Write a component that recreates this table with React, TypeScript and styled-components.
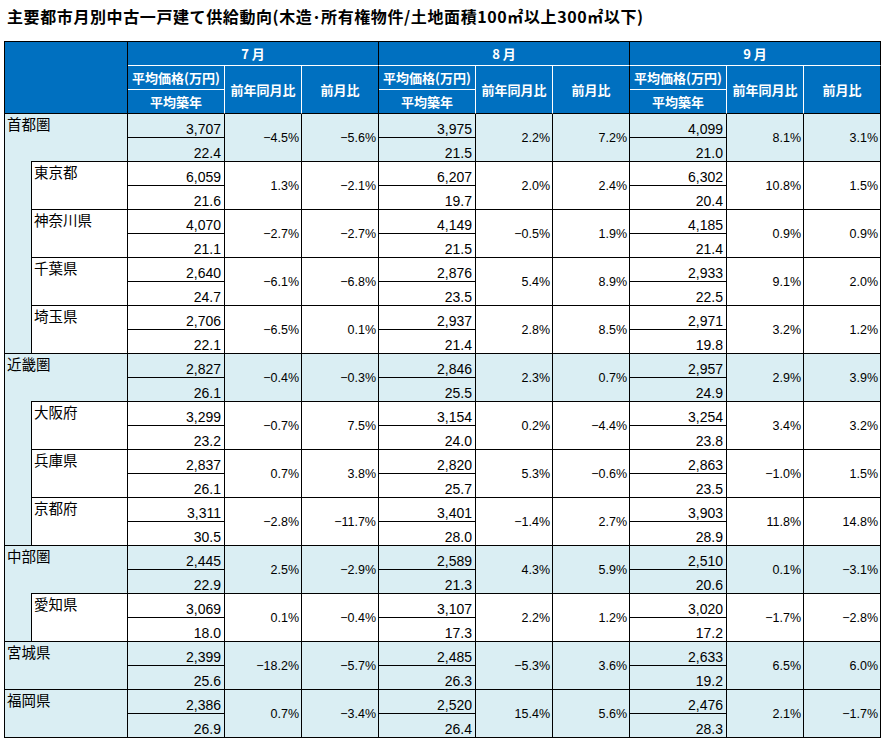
import React from "react";
import styled, { createGlobalStyle } from "styled-components";

const GlobalStyle = createGlobalStyle`
  html, body { margin: 0; padding: 0; background: #ffffff; }
  body { font-family: "Noto Sans CJK JP", "Noto Sans", sans-serif; }
`;

const BLUE = "#0070C0";
const LIGHT = "#DAEEF3";
const JP = `"Noto Sans CJK JP", "Noto Sans", sans-serif`;
const NUM = `"Liberation Sans", Arial, sans-serif`;

type Month = [string, string, string, string];
type Region = { name: string; data: [Month, Month, Month]; children?: Region[] };

const regions: Region[] = [
  {
    name: "首都圏",
    data: [
      ["3,707", "22.4", "−4.5%", "−5.6%"],
      ["3,975", "21.5", "2.2%", "7.2%"],
      ["4,099", "21.0", "8.1%", "3.1%"],
    ],
    children: [
      { name: "東京都", data: [["6,059", "21.6", "1.3%", "−2.1%"], ["6,207", "19.7", "2.0%", "2.4%"], ["6,302", "20.4", "10.8%", "1.5%"]] },
      { name: "神奈川県", data: [["4,070", "21.1", "−2.7%", "−2.7%"], ["4,149", "21.5", "−0.5%", "1.9%"], ["4,185", "21.4", "0.9%", "0.9%"]] },
      { name: "千葉県", data: [["2,640", "24.7", "−6.1%", "−6.8%"], ["2,876", "23.5", "5.4%", "8.9%"], ["2,933", "22.5", "9.1%", "2.0%"]] },
      { name: "埼玉県", data: [["2,706", "22.1", "−6.5%", "0.1%"], ["2,937", "21.4", "2.8%", "8.5%"], ["2,971", "19.8", "3.2%", "1.2%"]] },
    ],
  },
  {
    name: "近畿圏",
    data: [
      ["2,827", "26.1", "−0.4%", "−0.3%"],
      ["2,846", "25.5", "2.3%", "0.7%"],
      ["2,957", "24.9", "2.9%", "3.9%"],
    ],
    children: [
      { name: "大阪府", data: [["3,299", "23.2", "−0.7%", "7.5%"], ["3,154", "24.0", "0.2%", "−4.4%"], ["3,254", "23.8", "3.4%", "3.2%"]] },
      { name: "兵庫県", data: [["2,837", "26.1", "0.7%", "3.8%"], ["2,820", "25.7", "5.3%", "−0.6%"], ["2,863", "23.5", "−1.0%", "1.5%"]] },
      { name: "京都府", data: [["3,311", "30.5", "−2.8%", "−11.7%"], ["3,401", "28.0", "−1.4%", "2.7%"], ["3,903", "28.9", "11.8%", "14.8%"]] },
    ],
  },
  {
    name: "中部圏",
    data: [
      ["2,445", "22.9", "2.5%", "−2.9%"],
      ["2,589", "21.3", "4.3%", "5.9%"],
      ["2,510", "20.6", "0.1%", "−3.1%"],
    ],
    children: [
      { name: "愛知県", data: [["3,069", "18.0", "0.1%", "−0.4%"], ["3,107", "17.3", "2.2%", "1.2%"], ["3,020", "17.2", "−1.7%", "−2.8%"]] },
    ],
  },
  {
    name: "宮城県",
    data: [
      ["2,399", "25.6", "−18.2%", "−5.7%"],
      ["2,485", "26.3", "−5.3%", "3.6%"],
      ["2,633", "19.2", "6.5%", "6.0%"],
    ],
  },
  {
    name: "福岡県",
    data: [
      ["2,386", "26.9", "0.7%", "−3.4%"],
      ["2,520", "26.4", "15.4%", "5.6%"],
      ["2,476", "28.3", "2.1%", "−1.7%"],
    ],
  },
];

const months = ["7 月", "8 月", "9 月"];

const Page = styled.div`
  padding: 4px 0 0 4px;
`;

const Title = styled.h1`
  margin: 0 0 13px 3px;
  font-family: ${JP};
  font-size: 16px;
  font-weight: 700;
  line-height: 24px;
  letter-spacing: 0.6px;
  color: #000;
  white-space: nowrap;
`;

const Grid = styled.div`
  display: grid;
  grid-template-columns: 27px 96px repeat(3, 97px 77px 77px);
  grid-auto-rows: 24px;
  width: max-content;
  border-top: 1px solid #000;
  border-left: 1px solid #000;
`;

type Pos = {
  $r: number;
  $c: number;
  $rs?: number;
  $cs?: number;
  $rb?: string;
  $bb?: string;
  $bg?: string;
};

const Cell = styled.div<Pos>`
  grid-row: ${(p) => p.$r} / span ${(p) => p.$rs ?? 1};
  grid-column: ${(p) => p.$c} / span ${(p) => p.$cs ?? 1};
  box-sizing: border-box;
  min-width: 0;
  overflow: hidden;
  display: flex;
  border-right: 1px solid ${(p) => p.$rb ?? "#000"};
  border-bottom: ${(p) => (p.$bb === "none" ? "none" : `1px solid ${p.$bb ?? "#000"}`)};
  background-color: ${(p) => p.$bg ?? "#fff"};
  white-space: nowrap;
`;

const HeadCell = styled(Cell)`
  background-color: ${BLUE};
  color: #fff;
  font-family: ${JP};
  font-size: 13px;
  font-weight: 700;
  line-height: 16px;
  align-items: center;
  justify-content: center;
`;

const NameCell = styled(Cell)<{ $line?: boolean }>`
  font-family: ${JP};
  font-size: 14.5px;
  line-height: 18px;
  color: #000;
  padding: 1px 0 0 2px;
  align-items: flex-start;
  ${(p) =>
    p.$line
      ? `background-image: linear-gradient(#000, #000);
         background-repeat: no-repeat;
         background-position: 26px 100%;
         background-size: calc(100% - 26px) 1px;`
      : ""}
`;

const IndentCell = styled(Cell)``;

const PriceCell = styled(Cell)`
  font-family: ${NUM};
  font-size: 14px;
  line-height: 14px;
  color: #000;
  justify-content: flex-end;
  align-items: flex-end;
  padding: 0 3px 1px 0;
`;

const PctCell = styled(Cell)`
  font-family: ${NUM};
  font-size: 12.5px;
  line-height: 14px;
  color: #000;
  justify-content: flex-end;
  align-items: center;
  padding: 1px 2px 0 0;
`;

function Header() {
  const cells: React.ReactNode[] = [
    <HeadCell key="corner" $r={1} $c={1} $rs={3} $cs={2} />,
  ];
  months.forEach((m, i) => {
    const base = 3 + i * 3;
    cells.push(
      <HeadCell key={`m${i}`} $r={1} $c={base} $cs={3} $bb="#fff">
        {m}
      </HeadCell>,
      <HeadCell key={`p${i}`} $r={2} $c={base} $rb="#fff" $bb="#fff">
        平均価格(万円)
      </HeadCell>,
      <HeadCell key={`a${i}`} $r={3} $c={base} $rb="#fff">
        平均築年
      </HeadCell>,
      <HeadCell key={`y${i}`} $r={2} $c={base + 1} $rs={2} $rb="#fff">
        前年同月比
      </HeadCell>,
      <HeadCell key={`mo${i}`} $r={2} $c={base + 2} $rs={2}>
        前月比
      </HeadCell>
    );
  });
  return <>{cells}</>;
}

function DataCells({ region, row, bg }: { region: Region; row: number; bg: string }) {
  return (
    <>
      {region.data.map((d, i) => {
        const base = 3 + i * 3;
        return (
          <React.Fragment key={i}>
            <PriceCell $r={row} $c={base} $bg={bg}>{d[0]}</PriceCell>
            <PriceCell $r={row + 1} $c={base} $bg={bg}>{d[1]}</PriceCell>
            <PctCell $r={row} $c={base + 1} $rs={2} $bg={bg}>{d[2]}</PctCell>
            <PctCell $r={row} $c={base + 2} $rs={2} $bg={bg}>{d[3]}</PctCell>
          </React.Fragment>
        );
      })}
    </>
  );
}

function Body() {
  const out: React.ReactNode[] = [];
  let row = 4;
  regions.forEach((reg) => {
    const kids = reg.children ?? [];
    out.push(
      <NameCell
        key={reg.name}
        $r={row}
        $c={1}
        $rs={2}
        $cs={2}
        $bg={LIGHT}
        $bb={kids.length ? "none" : "#000"}
        $line={kids.length > 0}
      >
        {reg.name}
      </NameCell>,
      <DataCells key={`${reg.name}-d`} region={reg} row={row} bg={LIGHT} />
    );
    row += 2;
    if (kids.length) {
      out.push(
        <IndentCell key={`${reg.name}-ind`} $r={row} $c={1} $rs={kids.length * 2} $bg={LIGHT} />
      );
      kids.forEach((k) => {
        out.push(
          <NameCell key={k.name} $r={row} $c={2} $rs={2}>
            {k.name}
          </NameCell>,
          <DataCells key={`${k.name}-d`} region={k} row={row} bg="#fff" />
        );
        row += 2;
      });
    }
  });
  return <>{out}</>;
}

export default function App() {
  return (
    <Page>
      <GlobalStyle />
      <Title>主要都市月別中古一戸建て供給動向(木造･所有権物件/土地面積100㎡以上300㎡以下)</Title>
      <Grid>
        <Header />
        <Body />
      </Grid>
    </Page>
  );
}
